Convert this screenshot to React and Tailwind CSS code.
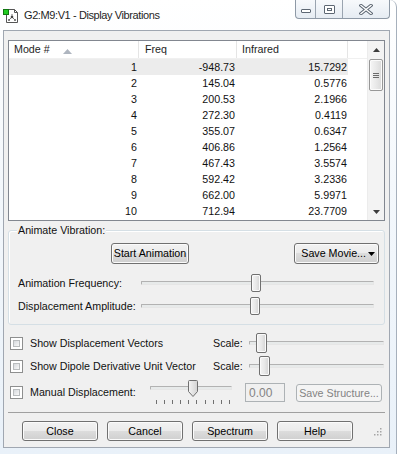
import React from "react";

const rows = [
  [1, "-948.73", "15.7292"],
  [2, "145.04", "0.5776"],
  [3, "200.53", "2.1966"],
  [4, "272.30", "0.4119"],
  [5, "355.07", "0.6347"],
  [6, "406.86", "1.2564"],
  [7, "467.43", "3.5574"],
  [8, "592.42", "3.2336"],
  [9, "662.00", "5.9971"],
  [10, "712.94", "23.7709"],
];

const WinButton = ({ children, className = "" }) => (
  <div
    className={`flex items-center justify-center rounded-[3px] border border-[#707070] bg-[linear-gradient(#f2f2f2_0%,#ebebeb_50%,#dddddd_50%,#cfcfcf_100%)] shadow-[inset_0_0_0_1px_#fbfbfb] text-[#000] ${className}`}
  >
    {children}
  </div>
);

const Checkbox = ({ className = "" }) => (
  <div className={`h-[13px] w-[13px] shrink-0 border border-[#8e8f8f] bg-white p-[2px] ${className}`}>
    <div className="h-full w-full border border-[#b9bcbe] bg-[linear-gradient(135deg,#d6d9dd,#f8f8f8)]" />
  </div>
);

const Track = ({ className = "" }) => (
  <div className={`h-[4px] rounded-[1px] border border-t-[#b2b2b2] border-l-[#b2b2b2] border-b-[#e6e6e6] border-r-[#e6e6e6] bg-[#e7eaea] ${className}`} />
);

const Slider = ({ width, left, thumbW = 10, thumbH = 18 }) => (
  <div className="relative flex items-center" style={{ width, height: thumbH }}>
    <Track className="w-full" />
    <div
      className="absolute top-0 rounded-[2px] border border-[#707070] bg-[linear-gradient(90deg,#f4f4f4,#e8e8e8_50%,#d3d3d3)] shadow-[inset_0_0_0_1px_#fafafa]"
      style={{ left, width: thumbW, height: thumbH }}
    />
  </div>
);

export default function App() {
  return (
    <div
      className="relative h-[454px] w-[397px] overflow-hidden rounded-tr-[7px] border-r border-[#a6b0bc] bg-[linear-gradient(180deg,#ffffff_0%,#f4f8fc_40%,#e9f1f9_100%)]"
      style={{ fontFamily: '"Liberation Sans", Arial, sans-serif' }}
    >
      {/* title bar */}
      <div className="relative flex h-[30px]">
        <svg className="ml-[3px] mt-[8px]" width="16" height="16" viewBox="0 0 16 16">
          <path d="M3.5 1.5h8l3 3v10h-11z" fill="#fff" stroke="#555" />
          <path d="M11.5 1.5v3h3" fill="none" stroke="#555" />
          <line x1="9" y1="6" x2="9" y2="9" stroke="#777" />
          <line x1="9" y1="9" x2="6" y2="12" stroke="#777" />
          <line x1="9" y1="9" x2="12" y2="12" stroke="#777" />
          <circle cx="9" cy="9" r="1.3" fill="#444" />
          <circle cx="6" cy="12" r="1.1" fill="#666" />
          <circle cx="12" cy="12" r="1.1" fill="#666" />
          <rect x="0.5" y="1.5" width="5" height="5" fill="#22cc22" stroke="#117711" />
        </svg>
        <div className="ml-[5px] mt-[7px] text-[11px] leading-[16px] tracking-[-0.4px] text-[#1e1e1e]">
          G2:M9:V1 - Display Vibrations
        </div>
        <div className="absolute left-[295px] top-0 flex h-[19px] overflow-hidden rounded-b-[4px] border border-t-0 border-[#8e99a6] bg-[linear-gradient(#f7f9fc,#e6ecf3)]">
          <div className="flex w-[20px] items-center justify-center border-r border-[#9aa4b0]">
            <div className="mt-[4px] h-[4px] w-[10px] rounded-[1px] border border-[#5d6773] bg-white" />
          </div>
          <div className="flex w-[27px] items-center justify-center border-r border-[#9aa4b0]">
            <div className="flex h-[9px] w-[11px] items-center justify-center rounded-[1px] border border-[#5d6773] bg-white">
              <div className="h-[3px] w-[5px] border border-[#5d6773]" />
            </div>
          </div>
          <div className="flex w-[46px] items-center justify-center">
            <svg width="14" height="11" viewBox="0 0 14 11">
              <path d="M2 1.5L12 9.5M12 1.5L2 9.5" stroke="#5d6773" strokeWidth="3.4" strokeLinecap="square" />
              <path d="M2 1.5L12 9.5M12 1.5L2 9.5" stroke="#ffffff" strokeWidth="1.4" strokeLinecap="square" />
            </svg>
          </div>
        </div>
      </div>

      {/* client area */}
      <div className="relative ml-[3px] h-[418px] w-[387px] border border-[#a0a7b1] bg-[#f0f0f0] text-[10.7px] text-[#111]">
        {/* list view */}
        <div className="ml-[4px] mt-[9px] flex h-[181px] w-[377px] border border-[#828790] bg-white">
          <div className="flex w-[358px] flex-col">
            <div className="flex h-[18px] items-center border-b border-[#f0f0f0] text-[#1e1e1e]">
              <div className="relative flex h-full w-[130px] items-center border-r border-[#e5e5e5] pl-[5px]">
                Mode #
                <svg className="absolute left-[54px] top-[8px]" width="9" height="5" viewBox="0 0 9 5">
                  <path d="M0 5L4.5 0L9 5z" fill="#aeb5bf" />
                </svg>
              </div>
              <div className="flex h-full w-[98px] items-center border-r border-[#e5e5e5] pl-[6px]">Freq</div>
              <div className="flex h-full w-[111px] items-center border-r border-[#e5e5e5] pl-[5px]">Infrared</div>
              <div className="h-full flex-1" />
            </div>
            {rows.map(([m, f, ir], i) => (
              <div key={m} className="flex h-[16px] items-center leading-[16px]">
                <div className={`flex w-[339px] ${i === 0 ? "bg-[#ececec]" : ""}`}>
                  <div className="w-[130px] pr-[2px] text-right">{m}</div>
                  <div className="w-[98px] pr-[2px] text-right">{f}</div>
                  <div className="w-[111px] pr-[1px] text-right">{ir}</div>
                </div>
              </div>
            ))}
          </div>
          {/* scrollbar */}
          <div className="flex w-[17px] flex-col border-l border-[#ececec] bg-[#f3f3f3]">
            <div className="flex h-[17px] items-center justify-center">
              <svg width="7" height="4" viewBox="0 0 7 4">
                <path d="M0 4L3.5 0L7 4z" fill="#3c3c3c" />
              </svg>
            </div>
            <div className="ml-[1px] mt-[1px] flex h-[32px] w-[14px] flex-col items-center justify-center gap-[1px] rounded-[2px] border border-[#979797] bg-[linear-gradient(90deg,#f6f6f6,#e9e9e9_50%,#dadada)] shadow-[inset_0_0_0_1px_#fbfbfb]">
              <div className="h-px w-[6px] bg-[#6b6b6b]" />
              <div className="h-px w-[6px] bg-[#6b6b6b]" />
              <div className="h-px w-[6px] bg-[#6b6b6b]" />
            </div>
            <div className="flex-1" />
            <div className="flex h-[17px] items-center justify-center">
              <svg width="7" height="4" viewBox="0 0 7 4">
                <path d="M0 0L3.5 4L7 0z" fill="#3c3c3c" />
              </svg>
            </div>
          </div>
        </div>

        {/* group box */}
        <div className="relative ml-[4px] mt-[9px] h-[95px] w-[377px] rounded-[3px] border border-[#d5dfe5] shadow-[inset_1px_1px_0_#fff]">
          <div className="absolute left-[8px] top-[-7px] bg-[#f0f0f0] px-[1px] leading-[13px]">Animate Vibration:</div>
          <div className="mt-[12px] flex h-[21px]">
            <WinButton className="ml-[102px] w-[78px]">Start Animation</WinButton>
            <WinButton className="ml-auto mr-[5px] w-[85px] justify-end gap-[2px] pr-[3px]">
              Save Movie...
              <svg width="7" height="4" viewBox="0 0 7 4">
                <path d="M0 0L3.5 4L7 0z" fill="#000" />
              </svg>
            </WinButton>
          </div>
          <div className="mt-[10px] flex h-[18px] items-center">
            <div className="w-[132px] pl-[9px]">Animation Frequency:</div>
            <Slider width={233} left={110} />
          </div>
          <div className="mt-[5px] flex h-[18px] items-center">
            <div className="w-[132px] pl-[9px]">Displacement Amplitude:</div>
            <Slider width={233} left={109} />
          </div>
        </div>

        {/* option rows */}
        <div className="mt-[8px] flex h-[20px] items-center">
          <Checkbox className="ml-[6px]" />
          <div className="ml-[7px] w-[183px]">Show Displacement Vectors</div>
          <div className="w-[36px]">Scale:</div>
          <Slider width={135} left={7} thumbW={11} thumbH={20} />
        </div>
        <div className="mt-[3px] flex h-[20px] items-center">
          <Checkbox className="ml-[6px]" />
          <div className="ml-[7px] w-[183px]">Show Dipole Derivative Unit Vector</div>
          <div className="w-[36px]">Scale:</div>
          <Slider width={135} left={10} thumbW={11} thumbH={20} />
        </div>
        <div className="mt-[2px] flex h-[30px] items-start">
          <Checkbox className="ml-[6px] mt-[8px]" />
          <div className="ml-[7px] mt-[8px] w-[120px] leading-[13px]">Manual Displacement:</div>
          <div className="relative h-[30px] w-[82px]">
            <Track className="absolute left-0 top-[8px] w-full" />
            <svg className="absolute left-[38px] top-[2px]" width="10" height="17" viewBox="0 0 10 17">
              <defs>
                <linearGradient id="tg" x1="0" x2="1" y1="0" y2="0">
                  <stop offset="0" stopColor="#f4f4f4" />
                  <stop offset="1" stopColor="#d3d3d3" />
                </linearGradient>
              </defs>
              <path d="M1.5 0.5h7a1 1 0 0 1 1 1v10l-4.5 5l-4.5 -5v-10a1 1 0 0 1 1 -1z" fill="url(#tg)" stroke="#707070" />
            </svg>
            <div className="absolute left-[6px] top-[22px] flex gap-[7.1px]">
              {Array.from({ length: 10 }).map((_, i) => (
                <div key={i} className="h-[4px] w-px bg-[#707070]" />
              ))}
            </div>
          </div>
          <div className="ml-[13px] mt-[5px] flex h-[19px] w-[40px] items-center border border-[#adb2b5] bg-[#f0f0f0] pl-[3px] text-[12px] text-[#838383]">
            0.00
          </div>
          <div className="ml-[11px] mt-[6px] flex h-[18px] w-[86px] items-center justify-center rounded-[3px] border border-[#adb2b5] bg-[#f4f4f4] text-[#838383]">
            Save Structure...
          </div>
        </div>
        <div className="ml-[4px] mt-[4px] w-[377px] border-t border-[#a0a0a0]" />
        <div className="ml-[18px] mt-[8px] flex h-[20px] gap-[9px]">
          <WinButton className="w-[76px]">Close</WinButton>
          <WinButton className="w-[76px]">Cancel</WinButton>
          <WinButton className="w-[76px]">Spectrum</WinButton>
          <WinButton className="w-[76px]">Help</WinButton>
        </div>
        {/* size grip */}
        <svg className="absolute bottom-[11px] right-[7px]" width="8" height="8" viewBox="0 0 8 8">
          {[[6, 0], [3, 3], [6, 3], [0, 6], [3, 6], [6, 6]].map(([x, y], i) => (
            <rect key={i} x={x} y={y} width="1.5" height="1.5" fill="#a5a5a5" />
          ))}
        </svg>
      </div>
    </div>
  );
}
